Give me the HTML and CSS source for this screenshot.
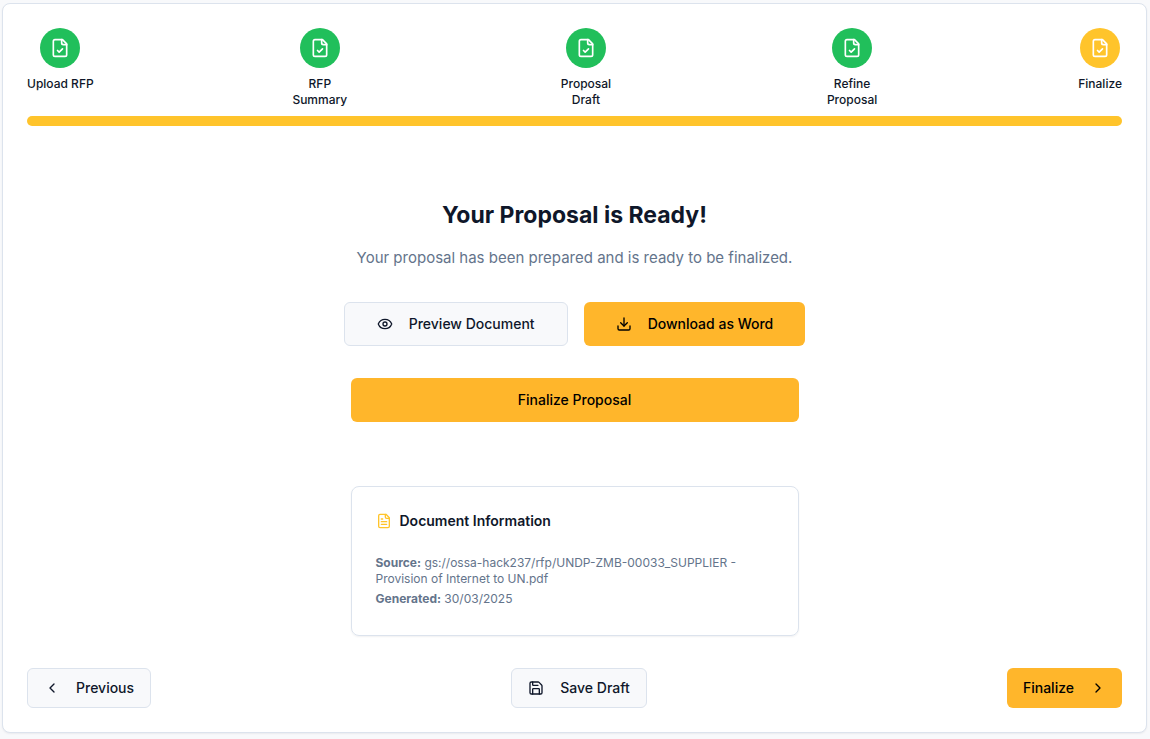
FILE: index.html
```html
<!DOCTYPE html>
<html lang="en">
<head>
<meta charset="utf-8">
<meta name="viewport" content="width=device-width, initial-scale=1">
<title>Finalize Proposal</title>
<link rel="stylesheet" href="styles.css">
</head>
<body>
<svg class="sprite" aria-hidden="true">
  <symbol id="file-check" viewBox="0 0 24 24"><path d="M15 2H6a2 2 0 0 0-2 2v16a2 2 0 0 0 2 2h12a2 2 0 0 0 2-2V7Z"/><path d="M14 2v4a2 2 0 0 0 2 2h4"/><path d="m9 15 2 2 4-4"/></symbol>
  <symbol id="file-text" viewBox="0 0 24 24"><path d="M15 2H6a2 2 0 0 0-2 2v16a2 2 0 0 0 2 2h12a2 2 0 0 0 2-2V7Z"/><path d="M14 2v4a2 2 0 0 0 2 2h4"/><path d="M10 9H8"/><path d="M16 13H8"/><path d="M16 17H8"/></symbol>
  <symbol id="eye" viewBox="0 0 24 24"><path d="M2.062 12.348a1 1 0 0 1 0-.696 10.75 10.75 0 0 1 19.876 0 1 1 0 0 1 0 .696 10.75 10.75 0 0 1-19.876 0"/><circle cx="12" cy="12" r="3"/></symbol>
  <symbol id="download" viewBox="0 0 24 24"><path d="M21 15v4a2 2 0 0 1-2 2H5a2 2 0 0 1-2-2v-4"/><path d="m7 10 5 5 5-5"/><path d="M12 15V3"/></symbol>
  <symbol id="save" viewBox="0 0 24 24"><path d="M15.2 3a2 2 0 0 1 1.4.6l3.8 3.8a2 2 0 0 1 .6 1.4V19a2 2 0 0 1-2 2H5a2 2 0 0 1-2-2V5a2 2 0 0 1 2-2z"/><path d="M17 21v-7a1 1 0 0 0-1-1H8a1 1 0 0 0-1 1v7"/><path d="M7 3v4a1 1 0 0 0 1 1h7"/></symbol>
  <symbol id="chevron-left" viewBox="0 0 24 24"><path d="m15 18-6-6 6-6"/></symbol>
  <symbol id="chevron-right" viewBox="0 0 24 24"><path d="m9 18 6-6-6-6"/></symbol>
</svg>
<main class="wizard">
  <ol class="steps">
    <li class="step"><span class="step-badge"><svg class="icon icon-lg"><use href="#file-check"/></svg></span><span class="step-label">Upload RFP</span></li>
    <li class="step"><span class="step-badge"><svg class="icon icon-lg"><use href="#file-check"/></svg></span><span class="step-label">RFP Summary</span></li>
    <li class="step"><span class="step-badge"><svg class="icon icon-lg"><use href="#file-check"/></svg></span><span class="step-label">Proposal Draft</span></li>
    <li class="step"><span class="step-badge"><svg class="icon icon-lg"><use href="#file-check"/></svg></span><span class="step-label">Refine Proposal</span></li>
    <li class="step" aria-current="step"><span class="step-badge step-badge-current"><svg class="icon icon-lg"><use href="#file-check"/></svg></span><span class="step-label">Finalize</span></li>
  </ol>
  <div class="progress" role="progressbar" aria-label="Progress" aria-valuemin="0" aria-valuemax="100" aria-valuenow="100"><div class="progress-fill" style="width: 100%"></div></div>

  <section class="ready">
    <h1 class="ready-title">Your Proposal is Ready!</h1>
    <p class="ready-text">Your proposal has been prepared and is ready to be finalized.</p>
    <div class="actions">
      <button type="button" class="btn btn-large btn-outline"><svg class="icon"><use href="#eye"/></svg>Preview Document</button>
      <button type="button" class="btn btn-large btn-primary"><svg class="icon"><use href="#download"/></svg>Download as Word</button>
    </div>
    <button type="button" class="btn btn-large btn-primary btn-wide">Finalize Proposal</button>
    <article class="info">
      <h2 class="info-title"><svg class="icon icon-accent"><use href="#file-text"/></svg>Document Information</h2>
      <p class="info-line"><strong>Source:</strong> gs://ossa-hack237/rfp/UNDP-ZMB-00033_SUPPLIER - Provision of Internet to UN.pdf</p>
      <p class="info-line"><strong>Generated:</strong> 30/03/2025</p>
    </article>
  </section>

  <footer class="nav">
    <button type="button" class="btn btn-outline"><svg class="icon"><use href="#chevron-left"/></svg>Previous</button>
    <button type="button" class="btn btn-outline"><svg class="icon"><use href="#save"/></svg>Save Draft</button>
    <button type="button" class="btn btn-primary">Finalize<svg class="icon"><use href="#chevron-right"/></svg></button>
  </footer>
</main>
</body>
</html>
```
FILE: styles.css
```css
*, *::before, *::after { box-sizing: border-box; }

body {
  margin: 0;
  padding: 3px 3px 6px 2px;
  background: #f8f9fb;
  color: #0f172a;
  font-family: Inter, "Liberation Sans", sans-serif;
  font-size: 14px;
  line-height: 20px;
}

h1, h2, p, ol { margin: 0; padding: 0; }

.sprite { display: none; }

.icon {
  width: 16px;
  height: 16px;
  flex-shrink: 0;
  fill: none;
  stroke: currentColor;
  stroke-width: 2;
  stroke-linecap: round;
  stroke-linejoin: round;
}
.icon-lg { width: 20px; height: 20px; }
.icon-accent { color: #ffc42b; }

.wizard {
  padding: 24px;
  background: #fff;
  border: 1px solid #dce3ed;
  border-radius: 8px;
  box-shadow: 0 1px 2px rgba(15, 23, 42, 0.06);
}

.steps {
  display: flex;
  justify-content: space-between;
  list-style: none;
}
.step {
  display: flex;
  flex-direction: column;
  align-items: center;
  gap: 8px;
}
.step-badge {
  display: flex;
  align-items: center;
  justify-content: center;
  width: 40px;
  height: 40px;
  border-radius: 50%;
  background: #21bf5b;
  color: #fff;
}
.step-badge-current { background: #ffc42b; }
.step-label {
  max-width: 80px;
  font-size: 12px;
  font-weight: 500;
  line-height: 16px;
  text-align: center;
}

.progress {
  height: 10px;
  margin-top: 8px;
  overflow: hidden;
  border-radius: 5px;
  background: #f1f5f9;
}
.progress-fill { height: 100%; background: #ffc42b; }

.ready {
  display: flex;
  flex-direction: column;
  align-items: center;
  padding: 73px 0 32px;
}
.ready-title {
  margin-bottom: 15px;
  font-size: 23px;
  font-weight: 700;
  line-height: 32px;
  text-align: center;
}
.ready-text {
  margin-bottom: 32px;
  color: #64748b;
  font-size: 15px;
  line-height: 24px;
  text-align: center;
}
.actions {
  display: flex;
  flex-wrap: wrap;
  justify-content: center;
  gap: 16px;
  margin-bottom: 32px;
}

.btn {
  display: inline-flex;
  align-items: center;
  justify-content: center;
  gap: 16px;
  min-height: 40px;
  padding: 0 16px;
  border: 0;
  border-radius: 6px;
  font: inherit;
  font-weight: 500;
  cursor: pointer;
}
.btn-large { min-height: 44px; padding: 0 32px; }
.btn-outline {
  border: 1px solid #dce3ed;
  background: #f8f9fb;
  color: #0f172a;
}
.btn-primary { background: #ffb62b; color: #000; }
.btn-wide { width: 100%; max-width: 448px; }

.info {
  width: 100%;
  max-width: 448px;
  margin-top: 64px;
  padding: 24px;
  border: 1px solid #dce3ed;
  border-radius: 8px;
  box-shadow: 0 1px 2px rgba(15, 23, 42, 0.06);
}
.info-title {
  display: flex;
  align-items: center;
  gap: 8px;
  margin-bottom: 24px;
  font-size: 14px;
  font-weight: 600;
  line-height: 20px;
}
.info-line {
  margin-bottom: 4px;
  color: #64748b;
  font-size: 12px;
  line-height: 16px;
}

.nav {
  display: flex;
  justify-content: space-between;
  align-items: center;
}
```
